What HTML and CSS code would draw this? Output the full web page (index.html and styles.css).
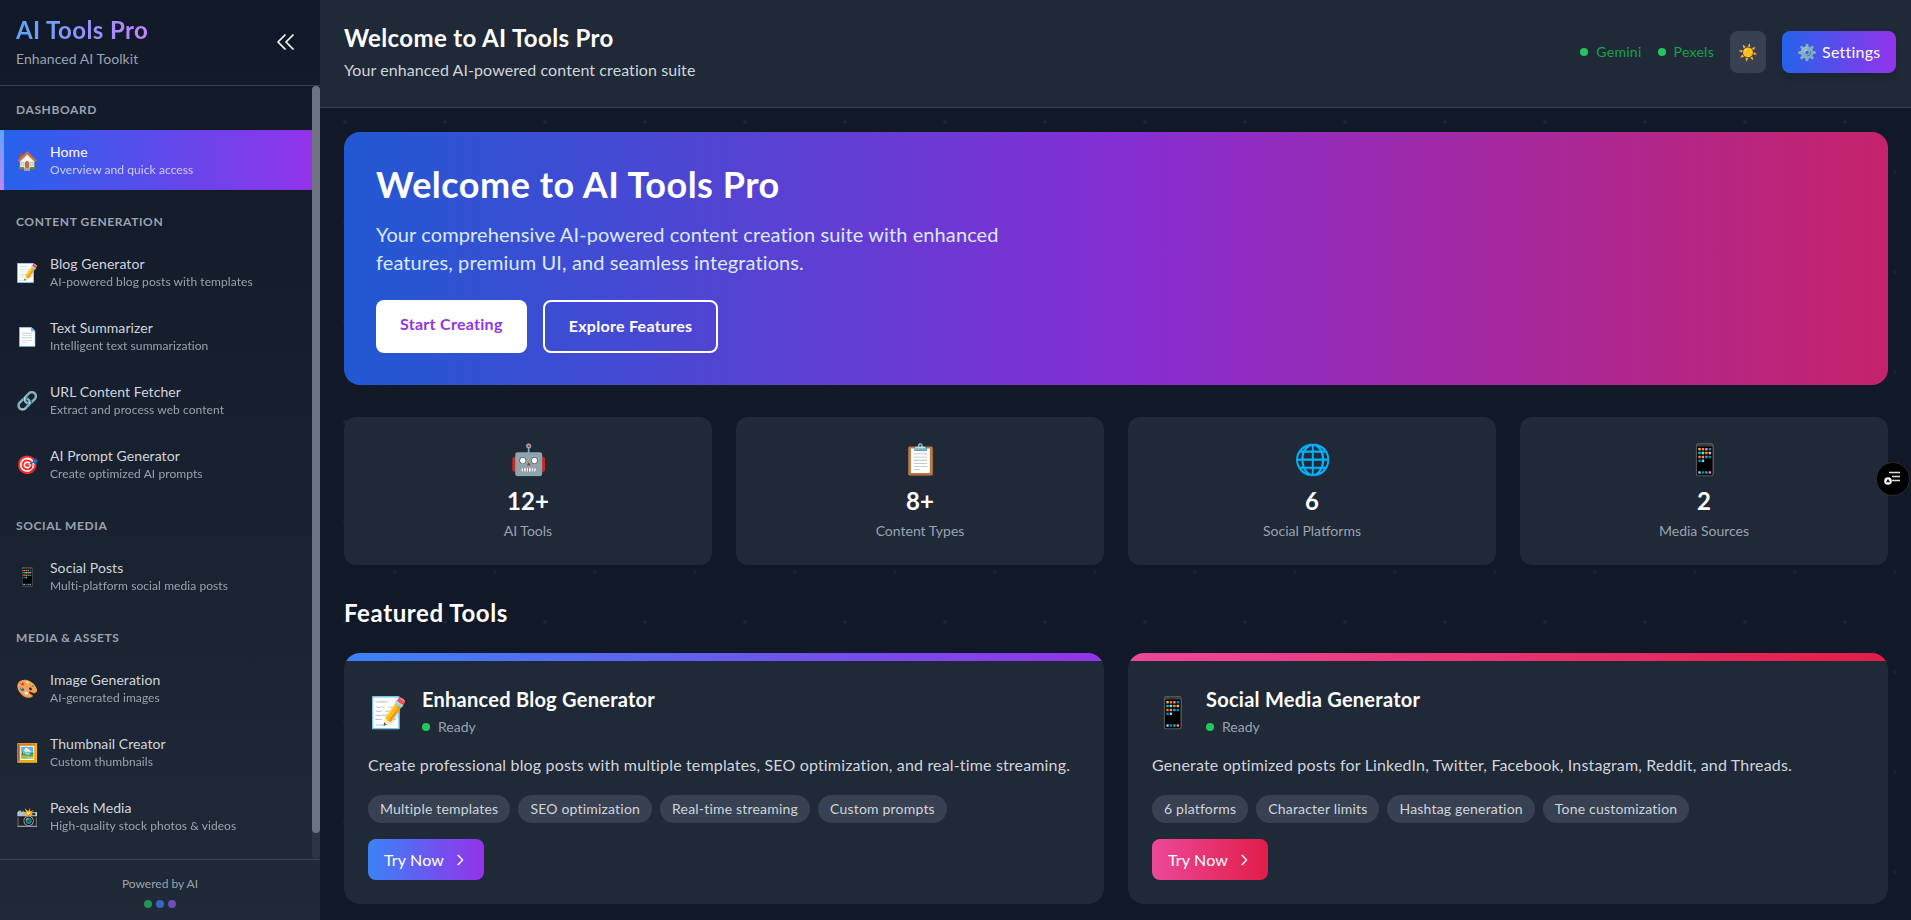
FILE: index.html
```html
<!DOCTYPE html>
<html lang="en">
<head>
	<meta charset="UTF-8">
	<meta name="viewport" content="width=device-width, initial-scale=1.0">
	<title>AI Tools Pro</title>
	<link rel="stylesheet" href="styles.css">
</head>
<body>
	<aside class="sidebar">
		<div class="brand">
			<div>
				<h1 class="brand-title">AI Tools Pro</h1>
				<p class="brand-sub">Enhanced AI Toolkit</p>
			</div>
			<button class="collapse">
				<svg width="24" height="24" viewBox="0 0 24 24" fill="none" stroke="currentColor" stroke-width="1.7" stroke-linecap="round" stroke-linejoin="round"><path d="M11 19l-7-7 7-7m8 14l-7-7 7-7"/></svg>
			</button>
		</div>
		<div class="nav-wrap">
			<nav class="nav">
				<section class="nav-group">
					<h3 class="nav-label">DASHBOARD</h3>
					<a class="nav-item active"><span class="nav-icon">🏠</span><span class="nav-text"><b>Home</b><small>Overview and quick access</small></span></a>
				</section>
				<section class="nav-group">
					<h3 class="nav-label">CONTENT GENERATION</h3>
					<a class="nav-item"><span class="nav-icon">📝</span><span class="nav-text"><b>Blog Generator</b><small>AI-powered blog posts with templates</small></span></a>
					<a class="nav-item"><span class="nav-icon">📄</span><span class="nav-text"><b>Text Summarizer</b><small>Intelligent text summarization</small></span></a>
					<a class="nav-item"><span class="nav-icon">🔗</span><span class="nav-text"><b>URL Content Fetcher</b><small>Extract and process web content</small></span></a>
					<a class="nav-item"><span class="nav-icon">🎯</span><span class="nav-text"><b>AI Prompt Generator</b><small>Create optimized AI prompts</small></span></a>
				</section>
				<section class="nav-group">
					<h3 class="nav-label">SOCIAL MEDIA</h3>
					<a class="nav-item"><span class="nav-icon">📱</span><span class="nav-text"><b>Social Posts</b><small>Multi-platform social media posts</small></span></a>
				</section>
				<section class="nav-group">
					<h3 class="nav-label">MEDIA &amp; ASSETS</h3>
					<a class="nav-item"><span class="nav-icon">🎨</span><span class="nav-text"><b>Image Generation</b><small>AI-generated images</small></span></a>
					<a class="nav-item"><span class="nav-icon">🖼️</span><span class="nav-text"><b>Thumbnail Creator</b><small>Custom thumbnails</small></span></a>
					<a class="nav-item"><span class="nav-icon">📸</span><span class="nav-text"><b>Pexels Media</b><small>High-quality stock photos &amp; videos</small></span></a>
				</section>
			</nav>
			<div class="scroll-track"><div class="scroll-thumb"></div></div>
		</div>
		<div class="side-footer">
			<p>Powered by AI</p>
			<div class="side-dots"><i class="green"></i><i class="blue"></i><i class="purple"></i></div>
		</div>
	</aside>

	<div class="content">
		<header class="topbar">
			<div>
				<h2 class="topbar-title">Welcome to AI Tools Pro</h2>
				<p class="topbar-sub">Your enhanced AI-powered content creation suite</p>
			</div>
			<div class="topbar-right">
				<span class="status">Gemini</span>
				<span class="status">Pexels</span>
				<button class="theme-btn">☀️</button>
				<button class="settings-btn">⚙️ Settings</button>
			</div>
		</header>

		<main class="main">
			<section class="hero">
				<h2>Welcome to AI Tools Pro</h2>
				<p>Your comprehensive AI-powered content creation suite with enhanced features, premium UI, and seamless integrations.</p>
				<div class="hero-actions">
					<button class="btn-white">Start Creating</button>
					<button class="btn-outline">Explore Features</button>
				</div>
			</section>

			<section class="stats">
				<div class="stat"><div class="stat-icon">🤖</div><div class="stat-value">12+</div><div class="stat-label">AI Tools</div></div>
				<div class="stat"><div class="stat-icon">📋</div><div class="stat-value">8+</div><div class="stat-label">Content Types</div></div>
				<div class="stat"><div class="stat-icon">🌐</div><div class="stat-value">6</div><div class="stat-label">Social Platforms</div></div>
				<div class="stat"><div class="stat-icon">📱</div><div class="stat-value">2</div><div class="stat-label">Media Sources</div></div>
			</section>

			<h2 class="section-title">Featured Tools</h2>

			<section class="tools">
				<article class="tool blog">
					<div class="tool-head">
						<span class="tool-icon">📝</span>
						<div>
							<h3>Enhanced Blog Generator</h3>
							<span class="ready">Ready</span>
						</div>
					</div>
					<p class="tool-desc">Create professional blog posts with multiple templates, SEO optimization, and real-time streaming.</p>
					<div class="chips">
						<span>Multiple templates</span>
						<span>SEO optimization</span>
						<span>Real-time streaming</span>
						<span>Custom prompts</span>
					</div>
					<button class="try">Try Now
						<svg width="16" height="16" viewBox="0 0 24 24" fill="none" stroke="currentColor" stroke-width="2" stroke-linecap="round" stroke-linejoin="round"><path d="M9 5l7 7-7 7"/></svg>
					</button>
				</article>
				<article class="tool social">
					<div class="tool-head">
						<span class="tool-icon">📱</span>
						<div>
							<h3>Social Media Generator</h3>
							<span class="ready">Ready</span>
						</div>
					</div>
					<p class="tool-desc">Generate optimized posts for LinkedIn, Twitter, Facebook, Instagram, Reddit, and Threads.</p>
					<div class="chips">
						<span>6 platforms</span>
						<span>Character limits</span>
						<span>Hashtag generation</span>
						<span>Tone customization</span>
					</div>
					<button class="try">Try Now
						<svg width="16" height="16" viewBox="0 0 24 24" fill="none" stroke="currentColor" stroke-width="2" stroke-linecap="round" stroke-linejoin="round"><path d="M9 5l7 7-7 7"/></svg>
					</button>
				</article>
			</section>
		</main>
	</div>

	<div class="float-btn">
		<svg width="20" height="20" viewBox="0 0 20 20" fill="none" stroke="#fff" stroke-width="1.5"><path d="M6 3.5h11M9 7.5h8M9 11.5h8" stroke="#ddd"/><circle cx="5" cy="12" r="3.8" fill="#fff" stroke="none"/><path d="M5 9.8l2 3.4H3z" fill="#111" stroke="none"/></svg>
	</div>
</body>
</html>
```

FILE: styles.css
```css
* {
	margin: 0;
	padding: 0;
	box-sizing: border-box;
}
body {
	display: flex;
	height: 100vh;
	overflow: hidden;
	font-family: "Lato", "Noto Sans", sans-serif;
	color: #fff;
	background-color: #111827;
}
button {
	border: none;
	font-family: inherit;
	color: inherit;
	background: none;
	cursor: pointer;
}

/* sidebar */
.sidebar {
	display: flex;
	flex-direction: column;
	flex: 0 0 320px;
	width: 320px;
	height: 100%;
	background: linear-gradient(to bottom, #111827, #1f2937);
}
.brand {
	display: flex;
	align-items: center;
	justify-content: space-between;
	height: 86px;
	padding: 0 19px 0 16px;
	border-bottom: 1px solid #374151;
}
.brand-title {
	margin-top: -2px;
	font-size: 24px;
	line-height: 32px;
	font-weight: 700;
	letter-spacing: 0.017em;
	background-image: linear-gradient(to right, #60a5fa, #c084fc);
	-webkit-background-clip: text;
	-webkit-text-fill-color: transparent;
}
.brand-sub {
	margin-top: 3px;
	font-size: 14px;
	line-height: 20px;
	letter-spacing: 0.005em;
	color: #9ca3af;
}
.collapse {
	display: flex;
	padding: 0 3px;
	margin-top: -1px;
}
.nav-wrap {
	position: relative;
	flex: 1 1 0%;
	min-height: 0;
}
.nav {
	height: 100%;
	padding: 16px 8px 0 0;
	overflow: hidden;
}
.scroll-track {
	position: absolute;
	top: 0;
	right: 0;
	bottom: 0;
	width: 8px;
	background-color: #2a3444;
	border-radius: 4px;
}
.scroll-thumb {
	height: 747px;
	background-color: #6b7280;
	border-radius: 4px;
}
.nav-group {
	margin-bottom: 24px;
}
.nav-label {
	padding: 0 16px;
	margin-bottom: 12px;
	font-size: 12px;
	line-height: 16px;
	font-weight: 700;
	letter-spacing: 0.05em;
	color: #9ca3af;
}
.nav-item {
	display: flex;
	align-items: center;
	gap: 12px;
	height: 60px;
	padding: 0 16px;
	margin-bottom: 4px;
	color: #d1d5db;
}
.nav-item.active {
	position: relative;
	color: #fff;
	background: linear-gradient(to right, #2563eb, #9333ea);
}
.nav-item.active::before {
	content: "";
	position: absolute;
	left: 0;
	top: 0;
	bottom: 0;
	width: 4px;
	background: linear-gradient(to bottom, #60a5fa, #c084fc);
}
.nav-icon {
	flex: 0 0 22px;
	font-size: 18px;
	text-align: center;
}
.nav-text {
	display: flex;
	flex-direction: column;
	padding-top: 2px;
}
.nav-text b {
	font-size: 14px;
	line-height: 18px;
	font-weight: 400;
	letter-spacing: 0.005em;
}
.nav-text small {
	font-size: 12px;
	line-height: 18px;
	letter-spacing: 0.006em;
	opacity: 0.7;
}
.side-footer {
	height: 61px;
	padding-top: 16px;
	text-align: center;
	border-top: 1px solid #374151;
	font-size: 12px;
	line-height: 16px;
	color: #9ca3af;
}
.side-dots {
	display: flex;
	justify-content: center;
	gap: 4px;
	margin-top: 8px;
}
.side-dots i {
	width: 8px;
	height: 8px;
	border-radius: 50%;
	opacity: 0.7;
}
.side-dots .green { background-color: #22c55e; }
.side-dots .blue { background-color: #3b82f6; }
.side-dots .purple { background-color: #8b5cf6; }

/* top bar */
.content {
	flex: 1 1 0%;
	min-width: 0;
	background-image:
		radial-gradient(circle at 25px 25px, rgba(59, 130, 246, 0.1) 2px, transparent 2px),
		radial-gradient(circle at 75px 75px, rgba(147, 51, 234, 0.1) 2px, transparent 2px);
	background-size: 100px 100px;
	background-position: 0 -3px;
}
.topbar {
	display: flex;
	align-items: center;
	justify-content: space-between;
	height: 108px;
	padding: 0 15px 4px 24px;
	background-color: #1f2937;
	border-bottom: 1px solid #374151;
}
.topbar-title {
	font-size: 24px;
	line-height: 32px;
	font-weight: 700;
	letter-spacing: 0.015em;
}
.topbar-sub {
	margin-top: 4px;
	font-size: 16px;
	line-height: 24px;
	letter-spacing: 0.005em;
	color: #d1d5db;
}
.topbar-right {
	display: flex;
	align-items: center;
}
.status {
	display: flex;
	align-items: center;
	gap: 8px;
	margin-right: 16px;
	font-size: 14px;
	letter-spacing: 0.02em;
	color: #16a34a;
}
.status::before {
	content: "";
	width: 8px;
	height: 8px;
	border-radius: 50%;
	background-color: #22c55e;
}
.theme-btn {
	width: 36px;
	height: 42px;
	margin-right: 16px;
	font-size: 16px;
	background-color: #374151;
	border-radius: 8px;
}
.settings-btn {
	width: 114px;
	height: 42px;
	font-size: 16px;
	letter-spacing: 0.015em;
	border-radius: 8px;
	background: linear-gradient(to right, #2563eb, #9333ea);
	box-shadow: 0 4px 6px rgba(0, 0, 0, 0.15);
}

/* main */
.main {
	padding: 24px 23px 24px 24px;
}
.hero {
	padding: 32px;
	margin-bottom: 32px;
	border-radius: 16px;
	background: linear-gradient(to right, #2159d3, #842ed3 50%, #c5236b);
}
.hero h2 {
	font-size: 36px;
	line-height: 40px;
	font-weight: 700;
	letter-spacing: 0.014em;
}
.hero p {
	max-width: 672px;
	margin-top: 16px;
	font-size: 20px;
	line-height: 28px;
	letter-spacing: 0.005em;
	color: #dbeafe;
}
.hero-actions {
	display: flex;
	gap: 16px;
	margin-top: 24px;
}
.btn-white, .btn-outline {
	padding: 12px 24px;
	font-size: 16px;
	line-height: 24px;
	font-weight: 700;
	letter-spacing: 0.018em;
	border-radius: 8px;
}
.btn-white {
	align-self: stretch;
	padding-bottom: 17px;
	color: #9333ea;
	background-color: #fff;
}
.btn-outline {
	padding-bottom: 13px;
	border: 2px solid #fff;
}
.stats {
	display: grid;
	grid-template-columns: repeat(4, 1fr);
	gap: 24px;
	margin-bottom: 32px;
}
.stat {
	height: 148px;
	padding: 23px 24px 24px;
	text-align: center;
	background-color: #1f2937;
	border-radius: 12px;
}
.stat-icon {
	font-size: 30px;
	line-height: 36px;
}
.stat-value {
	margin-top: 9px;
	font-size: 24px;
	line-height: 32px;
	font-weight: 700;
}
.stat-label {
	margin-top: 4px;
	font-size: 14px;
	line-height: 20px;
	color: #9ca3af;
}
.section-title {
	margin-bottom: 24px;
	font-size: 24px;
	line-height: 32px;
	font-weight: 700;
	letter-spacing: 0.025em;
}
.tools {
	display: grid;
	grid-template-columns: repeat(2, 1fr);
	gap: 24px;
}
.tool {
	padding: 32px 24px 24px;
	background-color: #1f2937;
	border-radius: 16px;
	background-repeat: no-repeat;
	background-size: 100% 8px;
}
.tool.blog {
	background-image: linear-gradient(to right, #3b82f6, #9333ea);
}
.tool.social {
	background-image: linear-gradient(to right, #ec4899, #e11d48);
}
.tool-head {
	display: flex;
	align-items: center;
	gap: 15px;
	margin-bottom: 16px;
}
.tool-icon {
	font-size: 30px;
	line-height: 36px;
	margin-left: 2px;
}
.tool-head h3 {
	font-size: 20px;
	line-height: 28px;
	font-weight: 700;
	letter-spacing: 0.013em;
}
.ready {
	display: flex;
	align-items: center;
	gap: 8px;
	margin-top: 4px;
	font-size: 14px;
	line-height: 20px;
	color: #9ca3af;
}
.ready::before {
	content: "";
	width: 8px;
	height: 8px;
	border-radius: 50%;
	background-color: #22c55e;
}
.tool-desc {
	margin-bottom: 18px;
	font-size: 16px;
	line-height: 24px;
	letter-spacing: 0.01em;
	color: #d1d5db;
}
.chips {
	display: flex;
	gap: 8px;
	margin-bottom: 16px;
}
.chips span {
	padding: 4px 12px;
	font-size: 14px;
	line-height: 20px;
	letter-spacing: 0.014em;
	color: #d1d5db;
	background-color: #374151;
	border-radius: 999px;
}
.try {
	display: flex;
	align-items: center;
	gap: 8px;
	height: 41px;
	padding: 0 16px;
	font-size: 16px;
	letter-spacing: 0.01em;
	color: #fff;
	border-radius: 8px;
}
.blog .try {
	background-image: linear-gradient(to right, #3b82f6, #9333ea);
}
.social .try {
	background-image: linear-gradient(to right, #ec4899, #e11d48);
}

/* floating widget over the page edge */
.float-btn {
	position: fixed;
	right: 1px;
	top: 462px;
	display: flex;
	align-items: center;
	justify-content: center;
	width: 34px;
	height: 34px;
	background-color: #000;
	border: 1px solid #2b2b2b;
	border-radius: 50%;
}
```
